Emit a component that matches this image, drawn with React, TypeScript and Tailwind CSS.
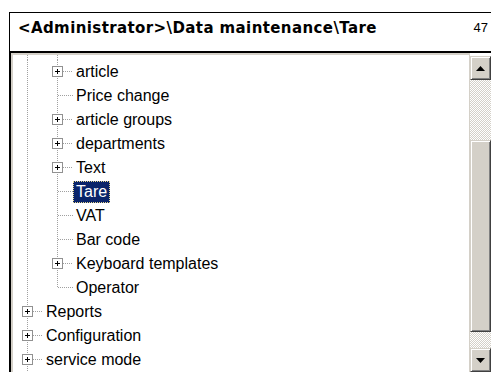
type Row = {
  label: string;
  level: number;
  plus?: boolean;
  last?: boolean;
  selected?: boolean;
};

const rows: Row[] = [
  { label: "article", level: 1, plus: true },
  { label: "Price change", level: 1 },
  { label: "article groups", level: 1, plus: true },
  { label: "departments", level: 1, plus: true },
  { label: "Text", level: 1, plus: true },
  { label: "Tare", level: 1, selected: true },
  { label: "VAT", level: 1 },
  { label: "Bar code", level: 1 },
  { label: "Keyboard templates", level: 1, plus: true },
  { label: "Operator", level: 1, last: true },
  { label: "Reports", level: 0, plus: true },
  { label: "Configuration", level: 0, plus: true },
  { label: "service mode", level: 0, plus: true },
];

const dot = "#a0a0a0";

function Guide({ h = 24 }: { h?: number }) {
  return (
    <svg width="30" height={h} className="block shrink-0">
      <line x1="14.5" y1="0" x2="14.5" y2={h} stroke={dot} strokeDasharray="1 1" />
    </svg>
  );
}

function Connector({ plus, last }: { plus?: boolean; last?: boolean }) {
  return (
    <svg width="30" height="24" className="block shrink-0">
      <line x1="14.5" y1="0" x2="14.5" y2={last ? 12 : 24} stroke={dot} strokeDasharray="1 1" />
      <line x1={plus ? 20 : 15} y1="11.5" x2="30" y2="11.5" stroke={dot} strokeDasharray="1 1" />
      {plus && (
        <g>
          <rect x="9.5" y="6.5" width="10" height="10" fill="#fff" stroke="#919191" />
          <line x1="12" y1="11.5" x2="17" y2="11.5" stroke="#000" />
          <line x1="14.5" y1="9" x2="14.5" y2="14" stroke="#000" />
        </g>
      )}
    </svg>
  );
}

function Arrow({ up }: { up?: boolean }) {
  return (
    <svg width="9" height="5" className="block">
      <polygon points={up ? "4.5,0 9,5 0,5" : "0,0 9,0 4.5,5"} fill="#000" />
    </svg>
  );
}

const btn =
  "bg-[#d4d0c8] border border-t-[#d4d0c8] border-l-[#d4d0c8] border-b-[#404040] border-r-[#404040] shadow-[inset_1px_1px_#fff,inset_-1px_-1px_#808080]";
const track =
  "bg-[repeating-conic-gradient(#d4d0c8_0%_25%,#ffffff_0%_50%)] bg-[length:2px_2px]";

export default function App() {
  return (
    <div className="h-[372px] w-[491px] overflow-hidden bg-white font-['Liberation_Sans',Arial,sans-serif] text-black">
      <div className="ml-[9px] mt-[12px] flex flex-col">
        {/* Header */}
        <div className="flex h-[41px] justify-between border-l border-t border-b-2 border-black bg-white">
          <div className="pl-[8px] pt-[4px] font-['DejaVu_Sans',Verdana,sans-serif] text-[15px] font-bold tracking-[0.4px]">
            &lt;Administrator&gt;\Data maintenance\Tare
          </div>
          <div className="pr-[3px] pt-[5px] font-['Liberation_Sans_Narrow','Liberation_Sans',sans-serif] text-[13px]">
            47
          </div>
        </div>

        {/* Tree panel */}
        <div className="flex h-[330px] border-l-2 border-black">
          <div className="flex flex-1 flex-col border-l-2 border-t-2 border-r border-[#d4d0c8] bg-white text-[16px]">
            <div className="flex">
              <Guide h={5} />
              <Guide h={5} />
            </div>
            {rows.map((r) => (
              <div key={r.label} className="flex h-[24px] items-center">
                {r.level === 1 && <Guide />}
                <Connector plus={r.plus} last={r.last} />
                {r.selected ? (
                  <span className="flex h-[22px] items-center border border-dotted border-[#e8d890] bg-[#0a246a] px-[2px] text-white">
                    {r.label}
                  </span>
                ) : (
                  <span className="ml-[3px] leading-[22px]">{r.label}</span>
                )}
              </div>
            ))}
          </div>

          {/* Scrollbar */}
          <div className="flex w-[21px] flex-col bg-white pt-[3px]">
            <div className={`${btn} flex h-[24px] items-center justify-center`}>
              <Arrow up />
            </div>
            <div className={`${track} h-[60px]`} />
            <div className={`${btn} h-[192px]`} />
            <div className={`${track} h-[16px]`} />
            <div className={`${btn} flex h-[24px] items-center justify-center`}>
              <Arrow />
            </div>
          </div>
        </div>
      </div>
    </div>
  );
}
